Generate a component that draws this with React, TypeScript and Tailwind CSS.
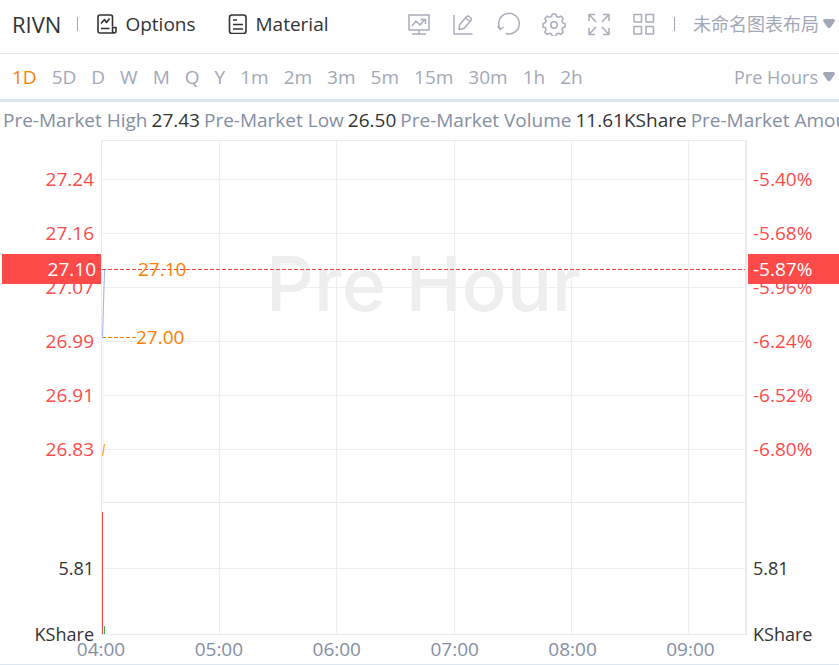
import { useState } from "react";

const PERIODS = ["1D", "5D", "D", "W", "M", "Q", "Y", "1m", "2m", "3m", "5m", "15m", "30m", "1h", "2h"];

const STATS = [
  { label: "Pre-Market High", value: "27.43" },
  { label: "Pre-Market Low", value: "26.50" },
  { label: "Pre-Market Volume", value: "11.61KShare" },
  { label: "Pre-Market Amount", value: "314.6K" },
];

const PRICES = ["27.24", "27.16", "27.07", "26.99", "26.91", "26.83"];
const CHANGES = ["-5.40%", "-5.68%", "-5.96%", "-6.24%", "-6.52%", "-6.80%"];
const HOURS = ["04:00", "05:00", "06:00", "07:00", "08:00", "09:00"];

// the session runs from 04:00 to just before 09:30
const SESSION_HOURS = 5.48;
const hourX = (i: number) => `${(i / SESSION_HOURS) * 100}%`;

const TOOLS = [
  {
    name: "Indicators",
    paths: ["M2 3h20v15H2z", "M12 18v4M5 22h14", "M5 14l4-5 4 4 5-6M13.500 7.500H18.500V12"],
  },
  {
    name: "Draw",
    paths: ["M2 3v19h18.500", "M7.500 13L14.500 4.500q1.500-1 2.500 0l2 1.500q1 1 0 2.500L12 16.500l-5 1zM13.500 6l4.500 3.500"],
  },
  { name: "Reset", paths: ["M3.200 17A10.300 10.300 0 1 1 9 21.500", "M.5 14l2.700 3.500L6.500 15"] },
  {
    name: "Settings",
    paths: [
      "M10.300 2h3.400l.8 2.600 1.900.8 2.400-1.300 2.400 2.400-1.300 2.400.8 1.900 2.300.8v3.400l-2.300.8-.8 1.900 1.300 2.400-2.400 2.400-2.400-1.300-1.900.8-.8 2.300h-3.400l-.8-2.300-1.900-.8-2.400 1.300-2.400-2.400 1.300-2.400-.8-1.900L1 15v-3.400l2.300-.8.8-1.900-1.300-2.400 2.400-2.400 2.400 1.300 1.900-.8z",
      "M15.200 13a3.200 3.200 0 1 1-6.400 0 3.200 3.200 0 0 1 6.400 0z",
    ],
  },
  {
    name: "Full screen",
    paths: ["M9 10L2.500 3M2 9V2.500h6", "M15 10l6.500-7M16 2.500h6V9", "M9 15l-6.500 7M2 16v6.500h6", "M15 15l6.500 7M16 22.500h6V16"],
  },
  { name: "Grid", paths: ["M2 2.500h7.500v7.500H2z", "M14 2.500h7.500v7.500H14z", "M2 14.500h7.500V22H2z", "M14 14.500h7.500V22H14z"] },
];

function Dropdown({ label, value }: { label: string; value: string }) {
  return (
    <label className="relative flex items-center">
      <span className="sr-only">{label}</span>
      <select className="appearance-none bg-transparent pr-5 text-[18px] text-[#a3a8b8] outline-none">
        <option>{value}</option>
      </select>
      <svg className="pointer-events-none absolute right-1 h-[10px] w-[12px]" viewBox="0 0 12 10" fill="#a3a8b8">
        <path d="M1.500 0h9Q12 0 12 2L7.500 8.500Q6 10 4.500 8.500L0 2Q0 0 1.500 0z" />
      </svg>
    </label>
  );
}

function Header() {
  return (
    <header className="flex h-[54px] items-center border-b border-[#e6e9ec] pb-[5px] pl-3">
      <h1 className="text-[22px] text-[#333]">RIVN</h1>
      <span className="ml-4 h-[14px] w-px bg-[#a3a8b8]" />
      <button className="ml-[19px] flex items-center gap-2 text-[#333]">
        <svg className="size-5" viewBox="0 0 20 20" fill="none" stroke="currentColor" strokeWidth="1.6" strokeLinejoin="round">
          <path d="M15.500 12.500V3a2 2 0 0 0-2-2H3a2 2 0 0 0-2 2v14a2 2 0 0 0 2 2h14a2 2 0 0 0 2-2v-3.500h-3.500V17a2 2 0 0 0 2 2" />
          <path d="M4 9.500l3.500-4 2 3 3-4M4 14.500h8.500" />
        </svg>
        Options
      </button>
      <button className="ml-[32px] flex items-center gap-2 text-[#333]">
        <svg className="size-5" viewBox="0 0 20 20" fill="none" stroke="currentColor" strokeWidth="1.600">
          <rect x="1.500" y="1" width="16.500" height="18.500" rx="2.500" />
          <path d="M5 6h4M5 10.500h10M5 15h10" />
        </svg>
        Material
      </button>
      <div className="ml-auto flex items-center gap-[21px]">
        {TOOLS.map((tool) => (
          <button key={tool.name} aria-label={tool.name} className="text-[#a9adbc]">
            <svg className="size-6" viewBox="0 0 24 24" fill="none" stroke="currentColor" strokeWidth="1.500" strokeLinejoin="round">
              {tool.paths.map((d) => (
                <path key={d} d={d} />
              ))}
            </svg>
          </button>
        ))}
      </div>
      <span className="ml-[18px] mr-[18px] h-[14px] w-px bg-[#a3a8b8]" />
      <Dropdown label="Chart layout" value="未命名图表布局" />
    </header>
  );
}

function Periods() {
  const [active, setActive] = useState("1D");

  return (
    <nav className="flex h-12 items-center justify-between border-b-[3px] border-[#dde7f0] pl-3">
      <div className="flex gap-[15px]">
        {PERIODS.map((period) => (
          <button
            key={period}
            onClick={() => setActive(period)}
            className={period === active ? "text-[#ff8000]" : "text-[#a3a8b8]"}
          >
            {period}
          </button>
        ))}
      </div>
      <Dropdown label="Session" value="Pre Hours" />
    </nav>
  );
}

function Plot() {
  return (
    <div className="relative h-[495px] border border-r-2 border-[#e8eaee]">
      <div className="absolute inset-x-0 top-[98px] text-center font-['Inter',sans-serif] text-[75px] font-medium leading-[90px] text-[#eee]">
        Pre Hour
      </div>
      <svg className="absolute inset-0 size-full" shapeRendering="crispEdges">
        {PRICES.map((price, i) => (
          <line key={price} x1="0" x2="100%" y1={38.5 + i * 54} y2={38.5 + i * 54} stroke="#eee" />
        ))}
        <line x1="0" x2="100%" y1="361.5" y2="361.5" stroke="#e4eaf0" />
        <line x1="0" x2="100%" y1="427.5" y2="427.5" stroke="#eee" />
        {HOURS.slice(1).map((hour, i) => (
          <line key={hour} x1={hourX(i + 1)} x2={hourX(i + 1)} y1="0" y2="100%" stroke="#eee" />
        ))}
        <rect x="0" y="197" width="2" height="164" fill="#f8faff" />
        <line x1="0" x2="35" y1="196.5" y2="196.5" stroke="#ff8000" strokeDasharray="4 2" />
        <line x1="0" x2="100%" y1="128.5" y2="128.5" stroke="#f04848" strokeDasharray="4 2" />
        <rect x="0" y="371" width="1" height="122" fill="#ff4a4a" />
        <rect x="2" y="485" width="1" height="8" fill="#2dbd5a" />
      </svg>
      <svg className="absolute inset-0 size-full" fill="none">
        <path d="M2.500 129L.5 197" stroke="#a5adf5" />
        <path d="M2.500 303L.5 315" stroke="#ff9a2e" strokeWidth="1.200" />
      </svg>
      <span className="absolute left-[36px] top-[116px] leading-6 text-[#ff8000]">27.10</span>
      <span className="absolute left-[34px] top-[184px] leading-6 text-[#ff8000]">27.00</span>
    </div>
  );
}

export default function App() {
  return (
    <div className="overflow-hidden border-b border-[#dde7f0] bg-white font-['Open_Sans','Noto_Sans_CJK_SC',sans-serif] text-[19px] leading-6">
      <Header />
      <Periods />
      <div className="flex h-[38px] gap-1 whitespace-nowrap pl-[3px] pt-[6px]">
        {STATS.map((stat) => (
          <span key={stat.label} className="flex gap-1 text-[#858ea3]">
            {stat.label}
            <span className="text-[#333]">{stat.value}</span>
          </span>
        ))}
      </div>

      <div className="grid grid-cols-[101px_1fr_92px]">
        <div className="relative pr-[7px] pt-3 text-right text-[#ff4a4a]">
          {PRICES.map((price) => (
            <div key={price} className="h-[54px] leading-[54px]">
              {price}
            </div>
          ))}
          <div className="absolute left-[2px] right-0 top-[114px] bg-[#ff4a4a] pr-[5px] leading-[30px] text-white">27.10</div>
          <div className="mt-[80px] text-[18px] text-[#333]">5.81</div>
          <div className="mt-[42px] text-[18px] text-[#333]">KShare</div>
        </div>
        <Plot />
        <div className="relative pl-[6px] pt-3 text-[#ff4a4a]">
          {CHANGES.map((change) => (
            <div key={change} className="h-[54px] leading-[54px]">
              {change}
            </div>
          ))}
          <div className="absolute left-px right-0 top-[114px] bg-[#ff4a4a] pl-[5px] leading-[30px] text-white">-5.87%</div>
          <div className="mt-[80px] text-[18px] text-[#333]">5.81</div>
          <div className="mt-[42px] text-[18px] text-[#333]">KShare</div>
        </div>
      </div>

      {/* the last volume label hangs below the plot, so the hours are pulled up to its bottom edge */}
      <div className="relative -mt-[11px] ml-[101px] mr-[92px] h-[29px]">
        {HOURS.map((hour, i) => (
          <span key={hour} className="absolute top-[2px] -translate-x-1/2 text-[#858ea3]" style={{ left: hourX(i) }}>
            {hour}
          </span>
        ))}
      </div>
    </div>
  );
}
